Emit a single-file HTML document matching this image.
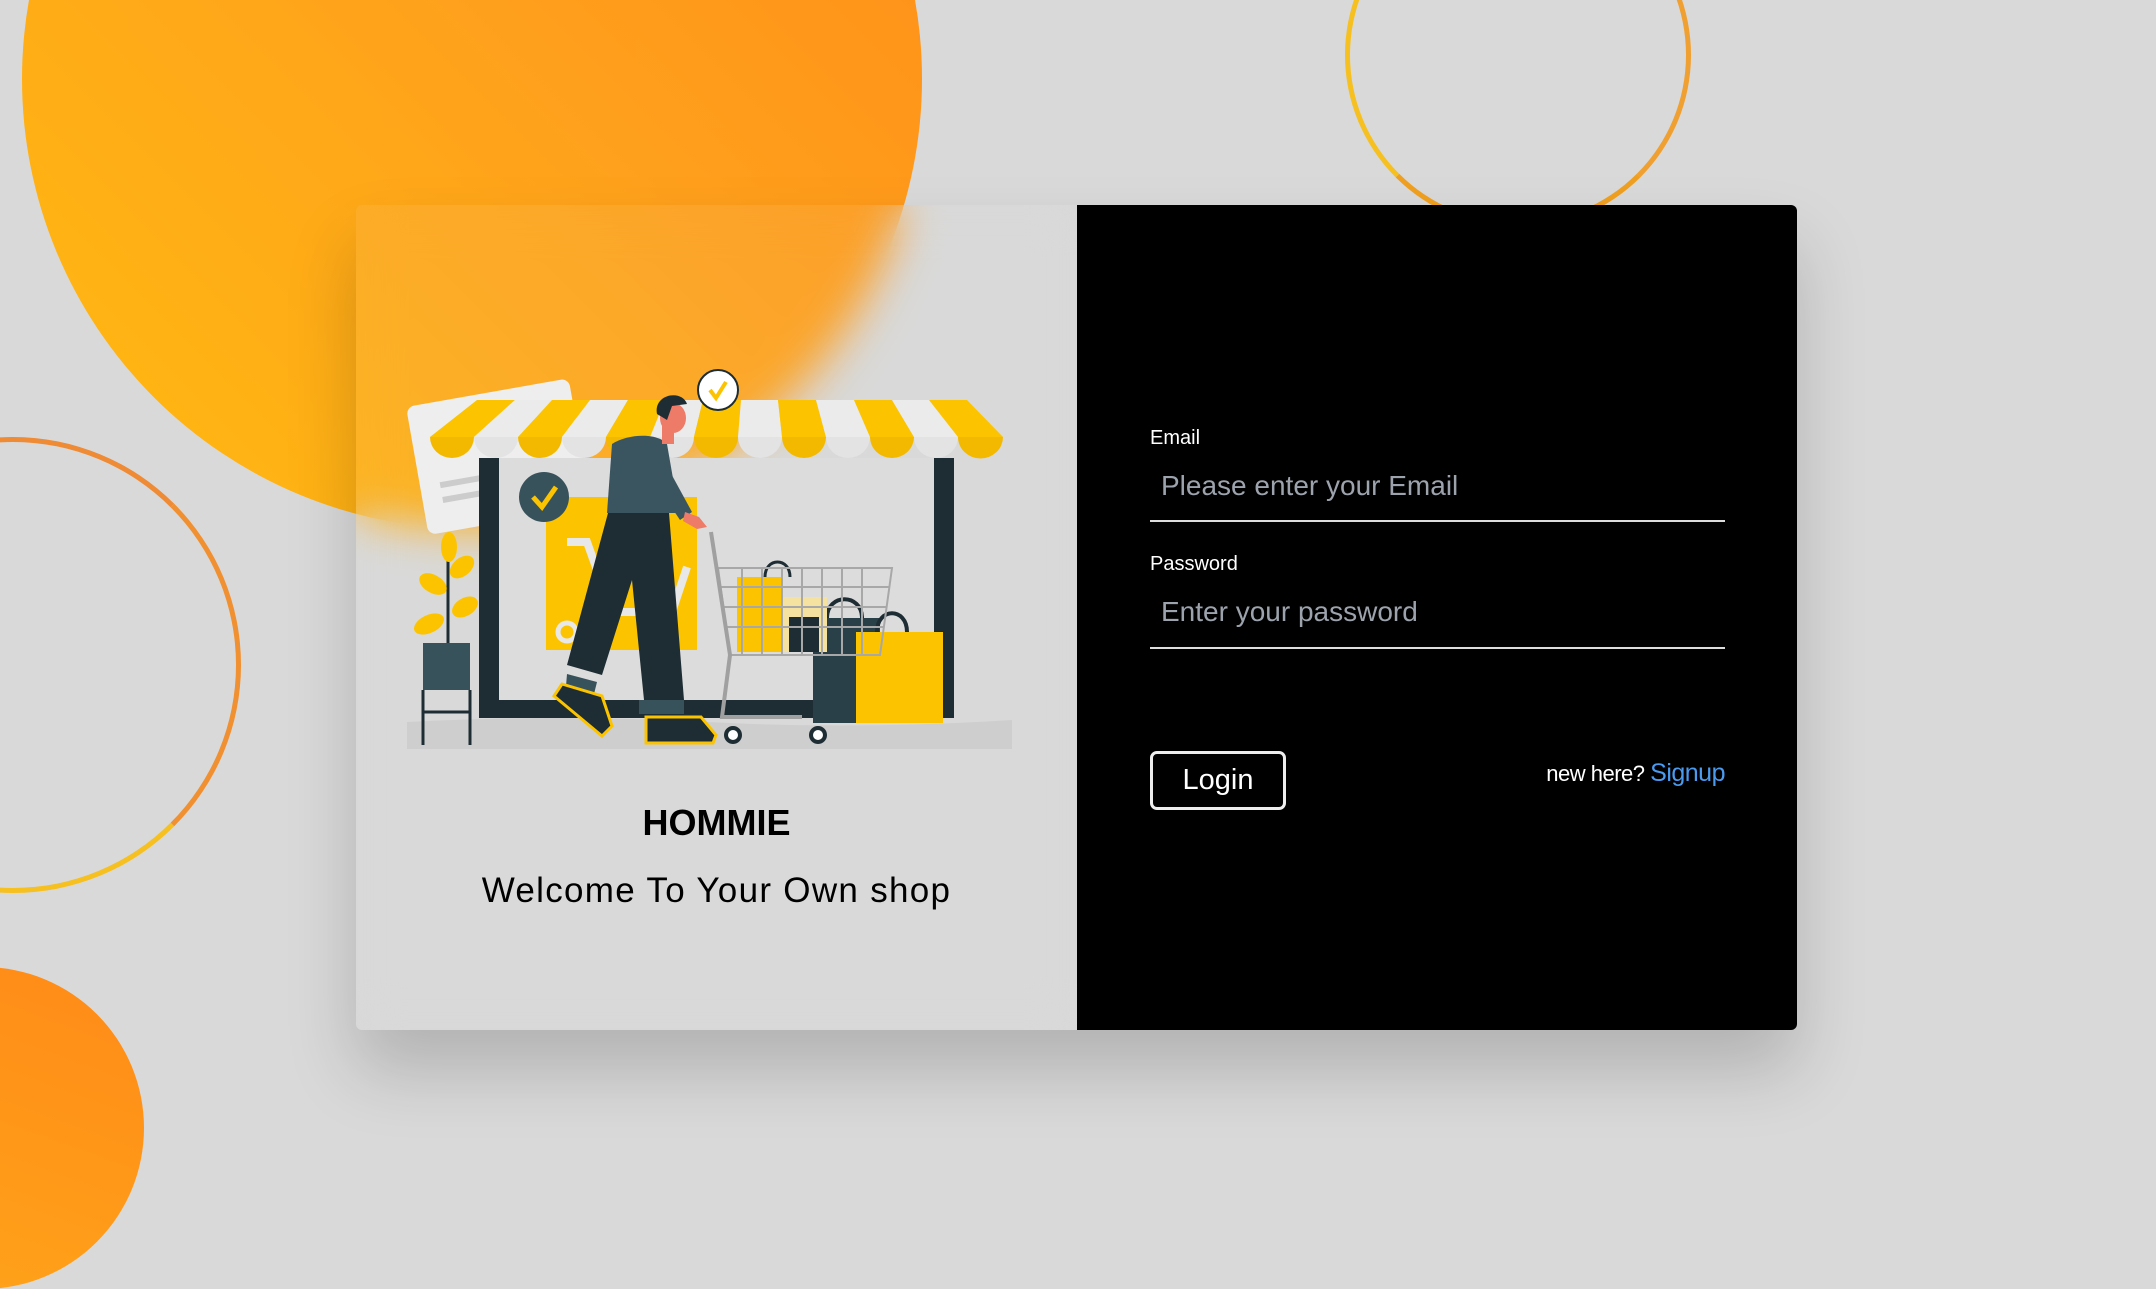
<!DOCTYPE html>
<html><head><meta charset="utf-8"><style>
*{margin:0;padding:0;box-sizing:border-box}
html,body{width:2156px;height:1234px;overflow:hidden;background:#d9d9d9;font-family:"Liberation Sans",sans-serif}
.abs{position:absolute}
.c1{left:22px;top:-371px;width:900px;height:900px;border-radius:50%;background:linear-gradient(225deg,#ff8a17 0%,#ffa01c 45%,#ffbb10 100%)}
.r1{left:1345px;top:-118px;width:346px;height:346px;border-radius:50%;border:5px solid #f0a030;border-left-color:#f5c020;border-bottom-color:#f0a020}
.r2{left:-215px;top:437px;width:456px;height:456px;border-radius:50%;border:5px solid #f09030;border-bottom-color:#f5c020;border-top-color:#ef8a35}
.c2{left:-178px;top:967px;width:322px;height:322px;border-radius:50%;background:linear-gradient(200deg,#ff8a17,#ffa51a)}
.card{left:356px;top:205px;width:1441px;height:825px;border-radius:6px;box-shadow:0 40px 70px rgba(0,0,0,.18)}
.left{left:356px;top:205px;width:721px;height:825px;border-radius:6px 0 0 6px;background:rgba(218,218,218,.08);backdrop-filter:blur(22px);overflow:hidden}
.right{left:1077px;top:205px;width:720px;height:825px;background:#000;border-radius:0 6px 6px 0}
.t1{left:356px;width:721px;top:802px;text-align:center;font-weight:bold;font-size:36px;color:#000}
.t2{left:356px;width:721px;top:871px;text-align:center;font-size:35px;color:#000;letter-spacing:1.3px}
.lbl{color:#fff;font-size:20px;left:1150px}
.ph{color:#9ca3ad;font-size:28px;left:1161px}
.line{left:1150px;width:575px;height:2px;background:#ddd}
.btn{left:1150px;top:751px;width:136px;height:59px;border:3px solid #eee;border-radius:7px;color:#fff;font-size:29px;text-align:center;line-height:53px}
.nh{right:431px;top:759px;color:#fff;font-size:22px;letter-spacing:-.5px}
.nh span{color:#4a9af0;font-size:25px}
</style></head><body>
<div class="abs c1"></div>
<div class="abs r1"></div>
<div class="abs r2"></div>
<div class="abs c2"></div>
<div class="abs card"></div>
<div class="abs left"></div>
<div class="abs right"></div>
<svg class="abs" style="left:407px;top:362px" width="605" height="387" viewBox="0 0 605 387">
<path d="M0 360 Q150 352 300 360 T605 358 V387 H0Z" fill="#cbcbcb" opacity=".8"/>
<g transform="rotate(-10 90 100)"><rect x="10" y="30" width="165" height="130" rx="8" fill="#eee"/><rect x="30" y="110" width="60" height="6" fill="#ccc"/><rect x="30" y="125" width="60" height="6" fill="#ccc"/></g>
<rect x="72" y="96" width="475" height="260" fill="#1e2d33"/>
<rect x="92" y="96" width="435" height="242" fill="#dcdcdc"/>
<rect x="139" y="135" width="151" height="153" fill="#fcc400"/>
<path d="M160 180h20l25 70h60l15-45" stroke="#e8e8e8" stroke-width="8" fill="none"/>
<circle cx="160" cy="270" r="9" fill="none" stroke="#e8e8e8" stroke-width="5"/>
<circle cx="137" cy="135" r="25" fill="#38525c"/><path d="M126 135l9 10 14-20" stroke="#fcc400" stroke-width="5" fill="none"/>
<g>
<path d="M70 38h38l-41 37h-44z" fill="#fcc400"/>
<path d="M108 38h37l-34 37h-44z" fill="#ebebeb"/>
<path d="M145 38h38l-28 37h-44z" fill="#fcc400"/>
<path d="M183 38h38l-22 37h-44z" fill="#ebebeb"/>
<path d="M221 38h37l-15 37h-44z" fill="#fcc400"/>
<path d="M258 38h38l-9 37h-44z" fill="#ebebeb"/>
<path d="M296 38h38l-3 37h-44z" fill="#fcc400"/>
<path d="M334 38h37l4 37h-44z" fill="#ebebeb"/>
<path d="M371 38h38l10 37h-44z" fill="#fcc400"/>
<path d="M409 38h38l16 37h-44z" fill="#ebebeb"/>
<path d="M447 38h38l22 37h-44z" fill="#fcc400"/>
<path d="M485 38h37l29 37h-44z" fill="#ebebeb"/>
<path d="M522 38h38l36 37h-45z" fill="#fcc400"/>
</g>
<g fill="#f2b900"><path d="M23 75a22 21 0 0 0 44 0z"/><path d="M111 75a22 21 0 0 0 44 0z"/><path d="M199 75a22 21 0 0 0 44 0z"/><path d="M287 75a22 21 0 0 0 44 0z"/><path d="M375 75a22 21 0 0 0 44 0z"/><path d="M463 75a22 21 0 0 0 44 0z"/><path d="M551 75a22 21 0 0 0 45 0z"/></g>
<g fill="#e3e3e3"><path d="M67 75a22 21 0 0 0 44 0z"/><path d="M155 75a22 21 0 0 0 44 0z"/><path d="M243 75a22 21 0 0 0 44 0z"/><path d="M331 75a22 21 0 0 0 44 0z"/><path d="M419 75a22 21 0 0 0 44 0z"/><path d="M507 75a22 21 0 0 0 44 0z"/></g>
<rect x="16" y="281" width="47" height="47" fill="#38525c"/><path d="M16 328v55M63 328v55M16 350h47" stroke="#1e2d33" stroke-width="3"/>
<path d="M41 281V180" stroke="#1e2d33" stroke-width="3"/>
<g fill="#fcc400"><ellipse cx="22" cy="262" rx="16" ry="9" transform="rotate(-25 22 262)"/><ellipse cx="58" cy="245" rx="14" ry="9" transform="rotate(-30 58 245)"/><ellipse cx="26" cy="222" rx="15" ry="9" transform="rotate(30 26 222)"/><ellipse cx="55" cy="205" rx="14" ry="9" transform="rotate(-40 55 205)"/><ellipse cx="42" cy="185" rx="8" ry="15"/></g>
<rect x="406" y="256" width="67" height="105" fill="#2a4048"/><rect x="449" y="270" width="87" height="91" fill="#fcc400"/>
<path d="M420 256c0-25 35-25 35 0M470 270c0-25 30-25 30 0" stroke="#1e2d33" stroke-width="4" fill="none"/>
<rect x="330" y="215" width="45" height="75" fill="#fcc400"/><rect x="375" y="235" width="45" height="55" fill="#f6e2a0"/><rect x="382" y="255" width="30" height="35" fill="#1e2d33"/>
<path d="M358 215c0-20 25-20 25 0" stroke="#1e2d33" stroke-width="3" fill="none"/>
<g stroke="#a8a8a8" stroke-width="2" fill="none"><path d="M311 206h174l-12 87H323z"/><path d="M314 225h168M316 245h164M319 265h158M335 206v87M355 206v87M375 206v87M395 206v87M415 206v87M435 206v87M455 206v87"/></g>
<path d="M304 170l19 123-8 62h80" stroke="#a0a0a0" stroke-width="4" fill="none"/>
<circle cx="326" cy="373" r="7" fill="#fff" stroke="#1e2d33" stroke-width="4"/><circle cx="411" cy="373" r="7" fill="#fff" stroke="#1e2d33" stroke-width="4"/>
<path d="M201 151h61l15 187h-40l-12-120-30 95-35-10z" fill="#1e2d33"/>
<path d="M160 312l30 8-3 12-28-8z" fill="#38525c"/>
<path d="M155 322l40 12 10 30-10 10-48-40z" fill="#1e2d33" stroke="#fcc400" stroke-width="3"/>
<rect x="232" y="338" width="45" height="14" fill="#38525c"/>
<path d="M239 355h55l15 18-3 8h-67z" fill="#1e2d33" stroke="#fcc400" stroke-width="3"/>
<path d="M205 82c15-10 45-12 55 0l12 69h-72z" fill="#3a5560"/>
<path d="M255 95l30 55-12 8-30-45z" fill="#3a5560"/><path d="M278 150l14 5 8 10-10 2-14-8z" fill="#ee7a68"/>
<rect x="255" y="64" width="12" height="18" fill="#ee7a68"/><ellipse cx="266" cy="56" rx="13" ry="15" fill="#ee7a68"/><path d="M250 52c-4-20 25-25 30-10l-15 2-5 14z" fill="#1e2d33"/>
<circle cx="311" cy="28" r="20" fill="#fff" stroke="#1e2d33" stroke-width="2"/><path d="M303 28l6 8 10-16" stroke="#fcc400" stroke-width="4" fill="none"/>
</svg>
<div class="abs t1">HOMMIE</div>
<div class="abs t2">Welcome To Your Own shop</div>
<div class="abs lbl" style="top:427px">Email</div>
<div class="abs ph" style="top:470px">Please enter your Email</div>
<div class="abs line" style="top:520px"></div>
<div class="abs lbl" style="top:553px">Password</div>
<div class="abs ph" style="top:596px">Enter your password</div>
<div class="abs line" style="top:647px"></div>
<div class="abs btn">Login</div>
<div class="abs nh">new here? <span>Signup</span></div>
</body></html>
